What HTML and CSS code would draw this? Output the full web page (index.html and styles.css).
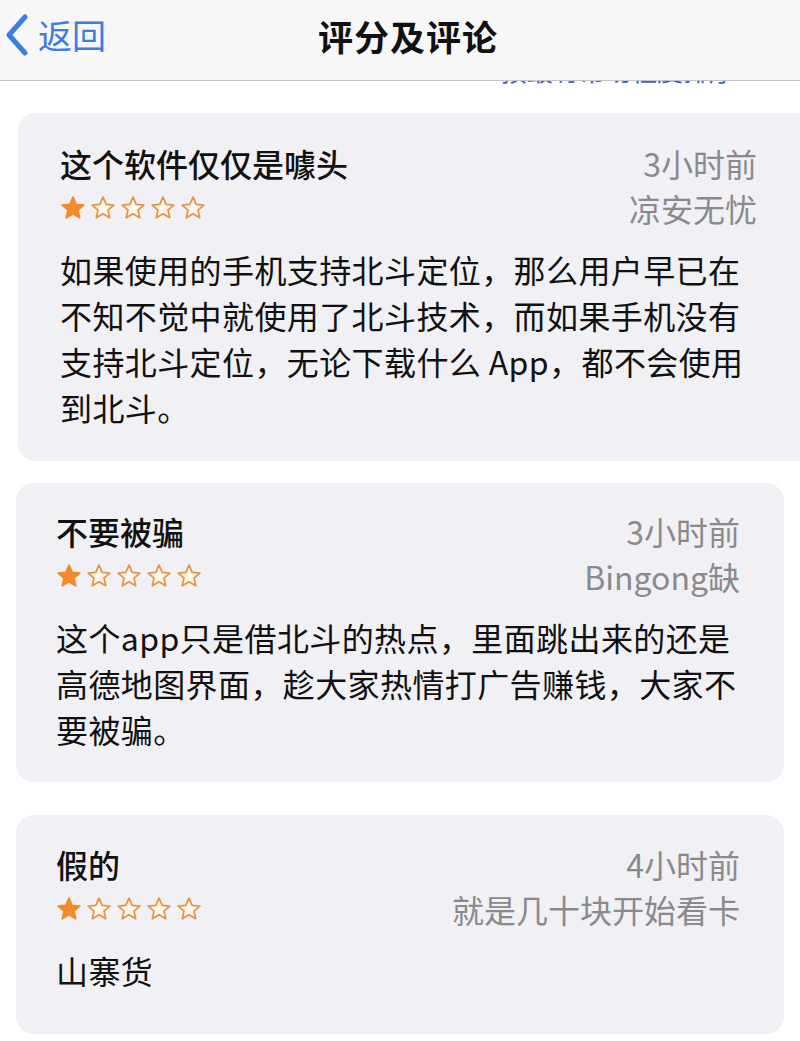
FILE: index.html
```html
<!DOCTYPE html>
<html lang="zh-CN">
<head>
    <meta charset="UTF-8">
    <meta name="viewport" content="width=device-width, initial-scale=1.0">
    <title>评分及评论</title>
    <link rel="stylesheet" href="styles.css">
</head>
<body>

    <!-- Navigation bar -->
    <header class="navbar">
        <a class="back" href="#">
            <svg class="back-icon" viewBox="0 0 24 42" width="24" height="42">
                <polyline points="20,3 4,21 20,39" fill="none" stroke="#3a7ee4" stroke-width="5" stroke-linecap="round" stroke-linejoin="round"/>
            </svg>
            <span>返回</span>
        </a>
        <h1 class="nav-title">评分及评论</h1>
    </header>

    <div class="sort-peek">按最有帮助程度排序</div>

    <main class="reviews">
        <!-- Review 1 -->
        <section class="review review-first">
            <div class="review-head">
                <h2 class="review-title">这个软件仅仅是噱头</h2>
                <span class="review-meta">3小时前</span>
                <div class="stars">
                    <svg class="star filled" viewBox="0 0 24 24"><polygon points="12,2 14.9,8.6 22,9.3 16.6,14 18.2,21 12,17.3 5.8,21 7.4,14 2,9.3 9.1,8.6"/></svg>
                    <svg class="star" viewBox="0 0 24 24"><polygon points="12,2 14.9,8.6 22,9.3 16.6,14 18.2,21 12,17.3 5.8,21 7.4,14 2,9.3 9.1,8.6"/></svg>
                    <svg class="star" viewBox="0 0 24 24"><polygon points="12,2 14.9,8.6 22,9.3 16.6,14 18.2,21 12,17.3 5.8,21 7.4,14 2,9.3 9.1,8.6"/></svg>
                    <svg class="star" viewBox="0 0 24 24"><polygon points="12,2 14.9,8.6 22,9.3 16.6,14 18.2,21 12,17.3 5.8,21 7.4,14 2,9.3 9.1,8.6"/></svg>
                    <svg class="star" viewBox="0 0 24 24"><polygon points="12,2 14.9,8.6 22,9.3 16.6,14 18.2,21 12,17.3 5.8,21 7.4,14 2,9.3 9.1,8.6"/></svg>
                </div>
                <span class="review-meta">凉安无忧</span>
            </div>
            <p class="review-body">如果使用的手机支持北斗定位，那么用户早已在<br>不知不觉中就使用了北斗技术，而如果手机没有<br>支持北斗定位，无论下载什么 App，都不会使用<br>到北斗。</p>
        </section>

        <!-- Review 2 -->
        <section class="review review-second">
            <div class="review-head">
                <h2 class="review-title">不要被骗</h2>
                <span class="review-meta">3小时前</span>
                <div class="stars">
                    <svg class="star filled" viewBox="0 0 24 24"><polygon points="12,2 14.9,8.6 22,9.3 16.6,14 18.2,21 12,17.3 5.8,21 7.4,14 2,9.3 9.1,8.6"/></svg>
                    <svg class="star" viewBox="0 0 24 24"><polygon points="12,2 14.9,8.6 22,9.3 16.6,14 18.2,21 12,17.3 5.8,21 7.4,14 2,9.3 9.1,8.6"/></svg>
                    <svg class="star" viewBox="0 0 24 24"><polygon points="12,2 14.9,8.6 22,9.3 16.6,14 18.2,21 12,17.3 5.8,21 7.4,14 2,9.3 9.1,8.6"/></svg>
                    <svg class="star" viewBox="0 0 24 24"><polygon points="12,2 14.9,8.6 22,9.3 16.6,14 18.2,21 12,17.3 5.8,21 7.4,14 2,9.3 9.1,8.6"/></svg>
                    <svg class="star" viewBox="0 0 24 24"><polygon points="12,2 14.9,8.6 22,9.3 16.6,14 18.2,21 12,17.3 5.8,21 7.4,14 2,9.3 9.1,8.6"/></svg>
                </div>
                <span class="review-meta">Bingong缺</span>
            </div>
            <p class="review-body">这个app只是借北斗的热点，里面跳出来的还是<br>高德地图界面，趁大家热情打广告赚钱，大家不<br>要被骗。</p>
        </section>

        <!-- Review 3 -->
        <section class="review review-third">
            <div class="review-head">
                <h2 class="review-title">假的</h2>
                <span class="review-meta">4小时前</span>
                <div class="stars">
                    <svg class="star filled" viewBox="0 0 24 24"><polygon points="12,2 14.9,8.6 22,9.3 16.6,14 18.2,21 12,17.3 5.8,21 7.4,14 2,9.3 9.1,8.6"/></svg>
                    <svg class="star" viewBox="0 0 24 24"><polygon points="12,2 14.9,8.6 22,9.3 16.6,14 18.2,21 12,17.3 5.8,21 7.4,14 2,9.3 9.1,8.6"/></svg>
                    <svg class="star" viewBox="0 0 24 24"><polygon points="12,2 14.9,8.6 22,9.3 16.6,14 18.2,21 12,17.3 5.8,21 7.4,14 2,9.3 9.1,8.6"/></svg>
                    <svg class="star" viewBox="0 0 24 24"><polygon points="12,2 14.9,8.6 22,9.3 16.6,14 18.2,21 12,17.3 5.8,21 7.4,14 2,9.3 9.1,8.6"/></svg>
                    <svg class="star" viewBox="0 0 24 24"><polygon points="12,2 14.9,8.6 22,9.3 16.6,14 18.2,21 12,17.3 5.8,21 7.4,14 2,9.3 9.1,8.6"/></svg>
                </div>
                <span class="review-meta">就是几十块开始看卡</span>
            </div>
            <p class="review-body">山寨货</p>
        </section>
    </main>

</body>
</html>
```

FILE: styles.css
```css
body {
    font-family: "Noto Sans CJK SC", "Noto Sans", sans-serif;
    margin: 0;
    width: 800px;
    height: 1041px;
    overflow: hidden;
    background: #fff;
    color: #111;
}
.navbar {
    position: relative;
    z-index: 2;
    height: 80px;
    background: #f7f7f7;
    border-bottom: 1px solid #c4c4c6;
    display: flex;
    align-items: center;
    justify-content: center;
}
.back {
    position: absolute;
    left: 5px;
    top: 14px;
    display: flex;
    align-items: center;
    gap: 9px;
    color: #3a7ee4;
    text-decoration: none;
    font-size: 34px;
    line-height: 42px;
}
.back-icon {
    display: block;
}
.nav-title {
    margin: 0 0 10px 16px;
    font-size: 35px;
    font-weight: 700;
    letter-spacing: 1px;
}
.sort-peek {
    margin-top: -26px;
    height: 30px;
    line-height: 30px;
    font-size: 26px;
    color: #3a63c9;
    text-align: right;
    padding-right: 65px;
}
.reviews {
    display: flex;
    flex-direction: column;
}
.review {
    background: #f0f0f5;
    border-radius: 18px;
}
.review-first {
    margin: 28px -24px 0 18px;
    padding: 28px 67px 31px 42px;
}
.review-second {
    margin: 22px 16px 0 16px;
    padding: 26px 44px 30px 40px;
}
.review-third {
    margin: 33px 16px 0 16px;
    padding: 27px 44px 42px 40px;
    height: 150px;
}
.review-head {
    display: grid;
    grid-template-columns: 1fr auto;
    grid-template-rows: 44px 46px;
    align-items: center;
}
.review-title {
    margin: 0;
    font-size: 32px;
    font-weight: 500;
    line-height: 44px;
}
.review-meta {
    justify-self: end;
    font-size: 32px;
    line-height: 44px;
    color: #8a8a8e;
}
.stars {
    display: flex;
    gap: 4px;
}
.star {
    width: 26px;
    height: 26px;
    fill: #fdf6ec;
    stroke: #e69442;
    stroke-width: 1.6;
    stroke-linejoin: round;
}
.star.filled {
    fill: #f08c2e;
    stroke: #f08c2e;
}
.review-body {
    margin: 15px 0 0;
    font-size: 32px;
    letter-spacing: 0.4px;
    line-height: 46px;
}
```
